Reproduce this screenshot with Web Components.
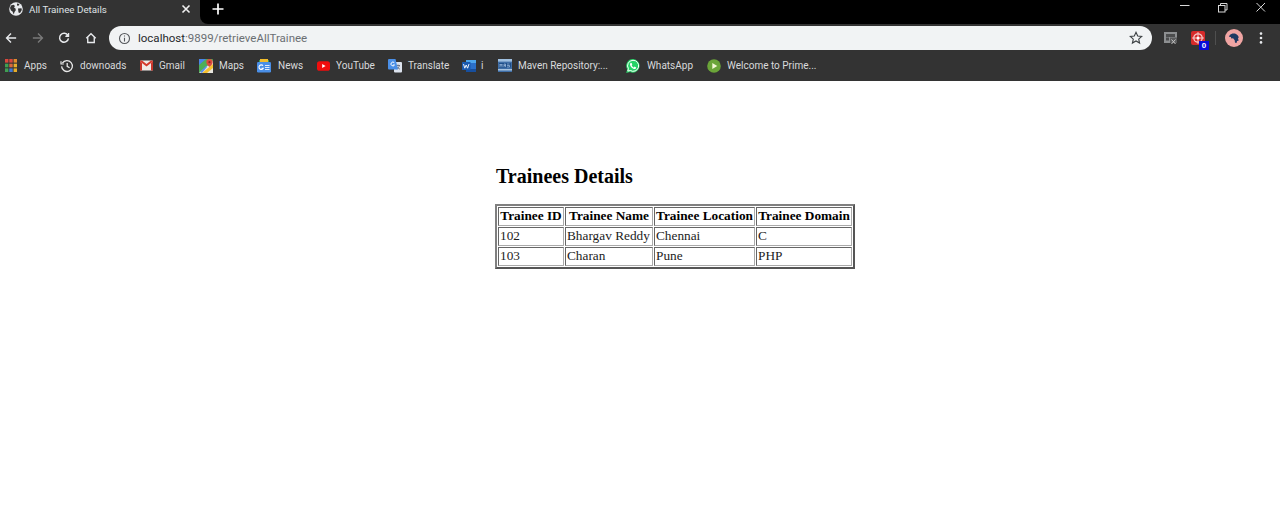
<!DOCTYPE html>
<html>
<head>
<meta charset="utf-8">
<title>All Trainee Details</title>
<style>
  html, body { margin: 0; padding: 0; background: #fff; }
  body { height: 509px; overflow: hidden; }
</style>
</head>
<body>
<browser-window>
  <tab-strip title="All Trainee Details"></tab-strip>
  <nav-toolbar host="localhost" path=":9899/retrieveAllTrainee"></nav-toolbar>
  <bookmark-bar>
    <bookmark-item label="Apps" w="55"><svg viewBox="0 0 12 13" width="12" height="13"><g>
      <rect x="0" y="0" width="3.400" height="3.600" fill="#d9483c"/><rect x="4.300" y="0" width="3.400" height="3.600" fill="#d9483c"/><rect x="8.600" y="0" width="3.400" height="3.600" fill="#e08a2e"/>
      <rect x="0" y="4.700" width="3.400" height="3.600" fill="#3e9f52"/><rect x="4.300" y="4.700" width="3.400" height="3.600" fill="#d9683c"/><rect x="8.600" y="4.700" width="3.400" height="3.600" fill="#e6ad2c"/>
      <rect x="0" y="9.400" width="3.400" height="3.600" fill="#3e9f52"/><rect x="4.300" y="9.400" width="3.400" height="3.600" fill="#3f78d6"/><rect x="8.600" y="9.400" width="3.400" height="3.600" fill="#e6ad2c"/></g></svg></bookmark-item>
    <bookmark-item label="downoads" w="80" g="20"><svg viewBox="0 0 14 14" width="14" height="14" fill="none" stroke="#e8e8e8" stroke-width="1.300"><path d="M2.400 4.200A5.400 5.400 0 1 1 1.600 7.400"/><path d="M1 2.200v2.800h2.800" stroke-width="1.200"/><path d="M7.200 4v3.400l2.400 1.400"/></svg></bookmark-item>
    <bookmark-item label="Gmail" w="59"><svg viewBox="0 0 13 11" width="13" height="11"><rect x="0" y="0.500" width="13" height="10" rx="1" fill="#f1e9e7"/><path d="M0 1.500 6.500 6.500 13 1.500v-.2A1 1 0 0 0 12 .5h-1L6.500 4 2 .5H1a1 1 0 0 0-1 .8z" fill="#d5392c"/><path d="M0 1.500V10a.6.6 0 0 0 .6.5H2V3zM13 1.500V10a.6.6 0 0 1-.6.5H11V3z" fill="#c9352b"/></svg></bookmark-item>
    <bookmark-item label="Maps" w="58" g="20"><svg viewBox="0 0 14 14" width="14" height="14"><rect width="14" height="14" rx="1" fill="#4fae57"/><path d="M0 14 14 2v12z" fill="#e8e6df"/><path d="M3 14 14 5v4L8 14z" fill="#f6c02f"/><path d="M0 6 7 0H0z" fill="#4a85e8"/><path d="M1 13 7 7l1 1-5 6z" fill="#5b8fe9"/><path d="M10.500 0a3.200 3.200 0 0 0-3.200 3.200c0 2.300 3.200 4.600 3.200 4.600s3.200-2.300 3.200-4.600A3.200 3.200 0 0 0 10.500 0z" fill="#dd4b3e"/><circle cx="10.500" cy="3.200" r="1.100" fill="#8e2a22"/></svg></bookmark-item>
    <bookmark-item label="News" w="60" g="21"><svg viewBox="0 0 14 14" width="14" height="14"><path d="M2 1h10v4H2z" fill="#3c9a57"/><path d="M3 0h8v3H3z" fill="#f2bd2c"/><rect x="0" y="3" width="14" height="10.500" rx="1.200" fill="#4a8fe7"/><path d="M8 6.500h4.500M8 8.500h4.500M8 10.500h4.500" stroke="#dfeafb" stroke-width="1"/><path d="M6 6.600A2.300 2.300 0 1 0 6.300 9.300H4.500" fill="none" stroke="#fff" stroke-width="1.100"/></svg></bookmark-item>
    <bookmark-item label="YouTube" w="71"><svg viewBox="0 0 13 10" width="13" height="10"><rect width="13" height="9.500" y="0.300" rx="2.600" fill="#f00d0d"/><path d="M5.200 3v4l3.400-2z" fill="#fff"/></svg></bookmark-item>
    <bookmark-item label="Translate" w="74" g="20"><svg viewBox="0 0 14 14" width="14" height="14"><rect x="6" y="3" width="8" height="10.500" rx="1" fill="#dce3ee"/><path d="M8 6.500h4M10 5.500v1M8.800 10c1.200-.6 2.300-2 2.600-3.500M9 7.600c.6 1.200 1.700 2.200 3 2.600" stroke="#5a6478" stroke-width=".8" fill="none"/><path d="M1 0h6.500L10 10.500H1a1 1 0 0 1-1-1V1a1 1 0 0 1 1-1z" fill="#4a8fe7"/><path d="M6.300 3.700A1.900 1.900 0 1 0 6.500 6H5" fill="none" stroke="#fff" stroke-width="1"/></svg></bookmark-item>
    <bookmark-item label="i" w="36"><svg viewBox="0 0 14 12" width="14" height="12"><rect x="4" y="0" width="10" height="12" rx="1" fill="#2b70c9"/><rect x="4" y="0" width="10" height="3" fill="#4ea6ec"/><rect x="4" y="9" width="10" height="3" fill="#174f9e"/><rect x="0" y="2" width="8.500" height="8" rx=".6" fill="#1b5aae"/><path d="M1.500 4 2.800 8.200 4.200 5 5.600 8.200 7 4" fill="none" stroke="#fff" stroke-width=".9"/></svg></bookmark-item>
    <bookmark-item label="Maven Repository:..." w="128" g="20"><svg viewBox="0 0 14 13" width="14" height="13"><rect width="14" height="13" fill="#3f6ea6"/><rect y="0" width="14" height="2.600" fill="#9fc0e0"/><rect y="10" width="14" height="1.500" fill="#a8c4e0"/><rect x="1" y="4" width="12" height="4.500" fill="#1f4f8a"/><path d="M2 8V5l1 1.500L4 5v3M6 8V5h1.500v3M6 6.500h1.500M9 5h2.500M9 6.500h2.500v1.500H9" stroke="#b9d3ee" stroke-width=".6" fill="none"/></svg></bookmark-item>
    <bookmark-item label="WhatsApp" w="81" g="21"><svg viewBox="0 0 14 14" width="14" height="14"><path d="M7 0a6.800 6.800 0 0 0-5.800 10.300L.2 14l3.800-1A6.800 6.800 0 1 0 7 0z" fill="#25d366"/><path d="M7 1.300a5.500 5.500 0 0 0-4.600 8.400l-.6 2.400 2.500-.6A5.500 5.500 0 1 0 7 1.300z" fill="none" stroke="#fff" stroke-width="1"/><path d="M4.900 3.800c-.5.300-1 1-.9 1.900.2 1.500 1.900 3.700 3.900 4.300 1 .3 1.900-.2 2.200-.9.100-.3.100-.6 0-.7l-1.500-.8-.7.800c-.9-.3-1.800-1.200-2.200-2l.6-.8-.7-1.700z" fill="#fff"/></svg></bookmark-item>
    <bookmark-item label="Welcome to Prime..." w="110" g="20"><svg viewBox="0 0 14 14" width="14" height="14"><circle cx="7" cy="7" r="6.800" fill="#6ba539"/><path d="M5.300 4v6l5-3z" fill="#f3f7d6"/></svg></bookmark-item>
  </bookmark-bar>
</browser-window>
<trainee-page heading="Trainees Details">
  <trainee-table></trainee-table>
</trainee-page>

<template id="browser-window-tpl">
  <style>
    :host { display: block; background: #333; height: 81px; font-family: Roboto, "Noto Sans", sans-serif; }
  </style>
  <slot></slot>
</template>

<template id="tab-strip-tpl">
  <style>
    :host { display: flex; height: 24px; background: #333; color: #e8eaed; }
    .tab { width: 200px; height: 18px; display: flex; align-items: center; box-sizing: border-box; padding: 0 9px; font-size: 9.800px; }
    .tab svg { flex: none; margin-right: 6px; }
    .tab span { flex: 1; white-space: nowrap; color: #dfe1e3; }
    .rest { flex: 1; display: flex; align-items: flex-start; background: #000; border-bottom-left-radius: 8px; }
    .plus { margin: 3px 0 0 12px; display: flex; }
    .win { margin-left: auto; display: flex; }
    .win svg { display: block; width: 39px; height: 14px; }
  </style>
  <div class="tab">
    <svg viewBox="0 0 14 14" width="14" height="14"><circle cx="7" cy="7" r="6.800" fill="#e8eaed"/><path d="M2 3.500 4.500 2.800 6 4 5 5.500 6.500 6.500 6.800 8.200 5.500 10 4.800 12.500 3.500 9.500 2 8.500 1 6zM8 1.500 10.500 2 9.500 3.800 8 3.500zM9 6.500 12.500 6.200 12.800 8 11 11 9.500 10.500z" fill="#333"/></svg>
    <span id="t"></span>
    <svg style="margin:0" viewBox="0 0 10 10" width="10" height="10" fill="none" stroke="#f0f0f0" stroke-width="1.600"><path d="M1.500 1.500l7 7M8.500 1.500l-7 7"/></svg>
  </div>
  <div class="rest">
    <svg class="plus" viewBox="0 0 12 12" width="12" height="12" fill="none" stroke="#fff" stroke-width="1.700"><path d="M6 .5v11M.5 6h11"/></svg>
    <div class="win">
      <svg viewBox="0 0 39 14" fill="none" stroke="#d8d8d8"><path d="M19 5.500h9.500"/></svg>
      <svg viewBox="0 0 39 14" fill="none" stroke="#d8d8d8"><rect x="18.500" y="5.500" width="6.500" height="6.500"/><path d="M20.500 5.500V3.500h6.500v6.500h-2"/></svg>
      <svg style="width:41px" viewBox="0 0 41 14" fill="none" stroke="#d8d8d8"><path d="M17.500 3 26 11.500M26 3 17.500 11.500"/></svg>
    </div>
  </div>
</template>

<template id="nav-toolbar-tpl">
  <style>
    :host { display: flex; align-items: center; height: 28px; background: #333; }
    .btns { display: flex; align-items: center; width: 109px; flex: none; padding-left: 5px; box-sizing: border-box; }
    .btns svg { width: 12px; height: 12px; margin-right: 14.600px; flex: none; }
    .omni { flex: none; width: 1043px; height: 24px; background: #f1f3f4; border-radius: 12px; display: flex; align-items: center; box-sizing: border-box; padding: 0 9px; font-size: 11.500px; color: #6b6f73; }
    .omni .txt { flex: 1; margin-left: 7px; white-space: nowrap; }
    .omni b { font-weight: 400; color: #26282b; }
    .ext { flex: 1; display: flex; align-items: center; position: relative; }
    .ext svg { flex: none; display: block; }
    .badge { position: absolute; left: 47px; top: 12px; width: 10px; height: 9px; background: #0909d8; color: #fff; font: 700 8px/9px "Liberation Sans", sans-serif; text-align: center; }
  </style>
  <div class="btns">
    <svg viewBox="0 0 14 14" fill="none" stroke="#e8eaed" stroke-width="1.600"><path d="M13 7H2M7 1.800 1.800 7 7 12.200"/></svg>
    <svg viewBox="0 0 14 14" fill="none" stroke="#7a7a7a" stroke-width="1.600"><path d="M1 7h11M7 1.800 12.200 7 7 12.200"/></svg>
    <svg viewBox="0 0 14 14" fill="none" stroke="#e8eaed" stroke-width="1.700"><path d="M11.600 4.200A5.200 5.200 0 1 0 12.200 7.500"/><path d="M12.400 1.200v3.800H8.600" stroke-width="1.400" fill="#e8eaed"/></svg>
    <svg viewBox="0 0 14 14" fill="none" stroke="#e8eaed" stroke-width="1.600"><path d="M1.500 7.200 7 2l5.500 5.200M3.200 6.200v6h7.600v-6"/></svg>
  </div>
  <div class="omni">
    <svg viewBox="0 0 13 13" width="13" height="13" fill="none" stroke="#55585c" stroke-width="1.100"><circle cx="6.500" cy="6.500" r="5"/><path d="M6.500 5.800v3.600M6.500 3.400v1.200"/></svg>
    <span class="txt"><b id="h"></b><span id="p"></span></span>
    <svg viewBox="0 0 14 14" width="14" height="14" fill="none" stroke="#3c4043" stroke-width="1.100"><path d="M7 1.300 8.700 5l4 .4-3 2.700.9 4L7 10l-3.600 2.100.9-4-3-2.700 4-.4z"/></svg>
  </div>
  <div class="ext">
    <svg style="margin-left:12px" viewBox="0 0 13 13" width="13" height="13"><rect width="13" height="11" fill="#8d8f91"/><path d="M2 2h9v3H2zM2 5.500h3v3H2z" fill="#4c4d4e"/><rect x="6" y="5.500" width="7" height="7.500" fill="#333" opacity=".55"/><path d="M7.500 7.500 11.500 12M11.500 7.500 7.500 12" stroke="#c4c4c4"/></svg>
    <svg style="margin-left:14px" viewBox="0 0 14 14" width="14" height="14">
      <rect width="14" height="14" rx="2" fill="#d72a2a"/>
      <circle cx="7" cy="7" r="4.200" fill="none" stroke="#f7c9c9" stroke-width="1.300"/>
      <path d="M7 1v12M1 7h12" stroke="#f7c9c9" stroke-width=".9"/>
      <circle cx="7" cy="7" r="1.500" fill="#fff"/>
    </svg>
    <span class="badge">0</span>
    <svg style="margin-left:10px" viewBox="0 0 1 14" width="1" height="14"><rect width="1" height="14" fill="#4f4f4f"/></svg>
    <svg style="margin-left:9px" viewBox="0 0 18 18" width="18" height="18"><circle cx="9" cy="9" r="9" fill="#f0a5a3"/><path d="M4.500 6.500C6 4.500 9 4 11 5c1.500.7 2.500 2 2.800 3.500l-.8.400.6 2.800-1.600.4-.2 1.600H10l-.3-2.400-1.600-2-1.800.3-.4-1.500-2-.4z" fill="#1f3a63"/></svg>
    <svg style="margin-left:16px" viewBox="0 0 4 12" width="4" height="12" fill="#e8eaed"><circle cx="2" cy="1.600" r="1.300"/><circle cx="2" cy="6" r="1.300"/><circle cx="2" cy="10.400" r="1.300"/></svg>
  </div>
</template>

<template id="bookmark-bar-tpl">
  <style>
    :host { display: flex; align-items: center; height: 28px; background: #333; padding: 0 0 1px 5px; box-sizing: border-box; }
  </style>
  <slot></slot>
</template>

<template id="bookmark-item-tpl">
  <style>
    :host { display: flex; align-items: center; flex: none; font-size: 10px; color: #d9dadc; white-space: nowrap; box-sizing: border-box; height: 16px; }
    .ic { flex: none; display: flex; align-items: center; }
  </style>
  <span class="ic" id="i"><slot></slot></span><span id="l"></span>
</template>

<template id="trainee-page-tpl">
  <style>
    :host { display: block; padding: 83px 0 0 495px; font-family: "Liberation Serif", "Times New Roman", serif; color: #000; }
    h2 { margin: 0 0 16px 1px; font-size: 20px; line-height: 24px; font-weight: 700; }
  </style>
  <h2 id="h"></h2>
  <slot></slot>
</template>

<template id="trainee-table-tpl">
  <style>
    :host { display: block; }
    table { border: 2px solid; border-color: #808080 #555 #555 #808080; border-spacing: 1px; border-collapse: separate; font-size: 13.300px; width: 360px; box-sizing: border-box; table-layout: fixed; color: #1c1c1c; }
    th, td { border: 1px solid; border-color: #666 #aaa #aaa #666; padding: 0 1px 2px; line-height: 15px; height: 15px; text-align: left; white-space: nowrap; }
    th { font-weight: 700; text-align: center; color: #000; }
  </style>
  <table>
    <colgroup><col style="width:66px"><col style="width:88px"><col style="width:101px"><col style="width:96px"></colgroup>
    <thead><tr><th>Trainee ID</th><th>Trainee Name</th><th>Trainee Location</th><th>Trainee Domain</th></tr></thead>
    <tbody id="b"></tbody>
  </table>
</template>

<script>
  const trainees = [
    ["102", "Bhargav Reddy", "Chennai", "C"],
    ["103", "Charan", "Pune", "PHP"]
  ];

  function define(tag, setup) {
    customElements.define(tag, class extends HTMLElement {
      connectedCallback() {
        if (this.shadowRoot) return;
        const root = this.attachShadow({ mode: "open" });
        root.append(document.getElementById(tag + "-tpl").content.cloneNode(true));
        if (setup) setup(root, this);
      }
    });
  }

  define("browser-window");
  define("bookmark-bar");
  define("tab-strip", (root, el) => {
    root.getElementById("t").textContent = el.getAttribute("title");
  });
  define("nav-toolbar", (root, el) => {
    root.getElementById("h").textContent = el.getAttribute("host");
    root.getElementById("p").textContent = el.getAttribute("path");
  });
  define("bookmark-item", (root, el) => {
    root.getElementById("l").textContent = el.getAttribute("label");
    root.getElementById("i").style.width = (el.getAttribute("g") || 19) + "px";
    el.style.width = el.getAttribute("w") + "px";
  });
  define("trainee-page", (root, el) => {
    root.getElementById("h").textContent = el.getAttribute("heading");
  });
  define("trainee-table", (root) => {
    const body = root.getElementById("b");
    for (const row of trainees) {
      const tr = document.createElement("tr");
      for (const value of row) {
        const td = document.createElement("td");
        td.textContent = value;
        tr.append(td);
      }
      body.append(tr);
    }
  });
</script>
</body>
</html>
